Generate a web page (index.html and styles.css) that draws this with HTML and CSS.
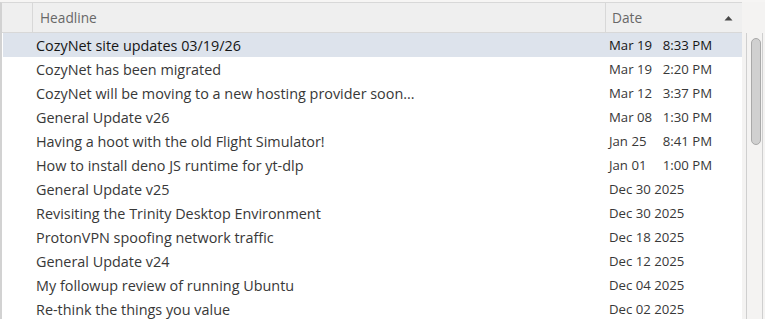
FILE: index.html
```html
<!DOCTYPE html>
<html>
<head>
<meta charset="utf-8">
<link rel="stylesheet" href="styles.css">
</head>
<body>
<div class="view">
  <div class="main">
    <div class="header">
      <div class="hcell check"></div>
      <div class="hcell headline">Headline</div>
      <div class="hcell date"><span>Date</span><svg class="sort" width="9" height="6" viewBox="0 0 9 6"><path d="M0.5 5.5 L4.5 1 L8.5 5.5 Z" fill="#474747"/></svg></div>
    </div>
    <div class="rows">
      <div class="row sel"><div class="c check"></div><div class="c headline">CozyNet site updates 03/19/26</div><div class="c date"><span class="dt"><span>Mar 19</span><span>8:33 PM</span></span></div></div>
      <div class="row"><div class="c check"></div><div class="c headline">CozyNet has been migrated</div><div class="c date"><span class="dt"><span>Mar 19</span><span>2:20 PM</span></span></div></div>
      <div class="row"><div class="c check"></div><div class="c headline">CozyNet will be moving to a new hosting provider soon...</div><div class="c date"><span class="dt"><span>Mar 12</span><span>3:37 PM</span></span></div></div>
      <div class="row"><div class="c check"></div><div class="c headline">General Update v26</div><div class="c date"><span class="dt"><span>Mar 08</span><span>1:30 PM</span></span></div></div>
      <div class="row"><div class="c check"></div><div class="c headline">Having a hoot with the old Flight Simulator!</div><div class="c date"><span class="dt"><span>Jan 25</span><span>8:41 PM</span></span></div></div>
      <div class="row"><div class="c check"></div><div class="c headline">How to install deno JS runtime for yt-dlp</div><div class="c date"><span class="dt"><span>Jan 01</span><span>1:00 PM</span></span></div></div>
      <div class="row"><div class="c check"></div><div class="c headline">General Update v25</div><div class="c date">Dec 30 2025</div></div>
      <div class="row"><div class="c check"></div><div class="c headline">Revisiting the Trinity Desktop Environment</div><div class="c date">Dec 30 2025</div></div>
      <div class="row"><div class="c check"></div><div class="c headline">ProtonVPN spoofing network traffic</div><div class="c date">Dec 18 2025</div></div>
      <div class="row"><div class="c check"></div><div class="c headline">General Update v24</div><div class="c date">Dec 12 2025</div></div>
      <div class="row"><div class="c check"></div><div class="c headline">My followup review of running Ubuntu</div><div class="c date">Dec 04 2025</div></div>
      <div class="row"><div class="c check"></div><div class="c headline">Re-think the things you value</div><div class="c date">Dec 02 2025</div></div>
    </div>
  </div>
  <div class="scroll">
    <div class="shead"></div>
    <div class="track"><div class="thumb"></div></div>
  </div>
</div>
</body>
</html>
```
FILE: styles.css
```css
html, body {
  margin: 0;
  padding: 0;
  background: #f6f5f4;
  height: 100%;
  overflow: hidden;
}
.view {
  display: flex;
  height: 319px;
  width: 765px;
  padding-top: 2px;
  box-sizing: border-box;
  font-family: "Open Sans", "Noto Sans", sans-serif;
  font-size: 13px;
}
.main {
  width: 742px;
  display: flex;
  flex-direction: column;
  border-left: 2px solid #d2d2d2;
  border-top: 1px solid #d8d8d8;
  box-sizing: border-box;
  background: #ffffff;
  overflow: hidden;
}
.header {
  display: flex;
  height: 30px;
  flex: none;
  background: #efefef;
  border-bottom: 1px solid #d8d8d8;
  box-sizing: border-box;
  padding-left: 1px;
  color: #686868;
  font-size: 13.7px;
}
.hcell {
  display: flex;
  align-items: center;
  box-sizing: border-box;
}
.check { width: 30px; flex: none; border-right: 1px solid #d8d8d8; }
.header .headline { width: 573px; flex: none; padding-left: 7px; border-right: 1px solid #d8d8d8; }
.header .date { flex: 1; padding-left: 6px; justify-content: space-between; padding-right: 9px; }
.rows { display: flex; flex-direction: column; padding-left: 1px; }
.row { display: flex; height: 24px; flex: none; color: #383838; }
.row.sel { background: #dde3ec; color: #161616; }
.c { display: flex; align-items: center; box-sizing: border-box; white-space: nowrap; }
.row .check { border-right: none; }
.row .headline { width: 573px; flex: none; padding-left: 3px; font-size: 14.4px; }
.row .date { flex: 1; padding-left: 3px; font-size: 13.2px; }
.dt { display: flex; justify-content: space-between; width: 103px; }
.scroll {
  width: 23px;
  display: flex;
  flex-direction: column;
  background: #f4f3f2;
}
.shead { height: 31px; flex: none; }
.track {
  flex: 1;
  margin-left: 4px;
  margin-right: 2px;
  border-left: 1px solid #cfcfcf;
  border-right: 1px solid #cfcfcf;
  padding-top: 5px;
  padding-left: 4px;
}
.thumb {
  width: 10px;
  height: 107px;
  box-sizing: border-box;
  border: 1px solid #a9a9a9;
  border-radius: 5px;
  background: #d0d0d0;
}
```
